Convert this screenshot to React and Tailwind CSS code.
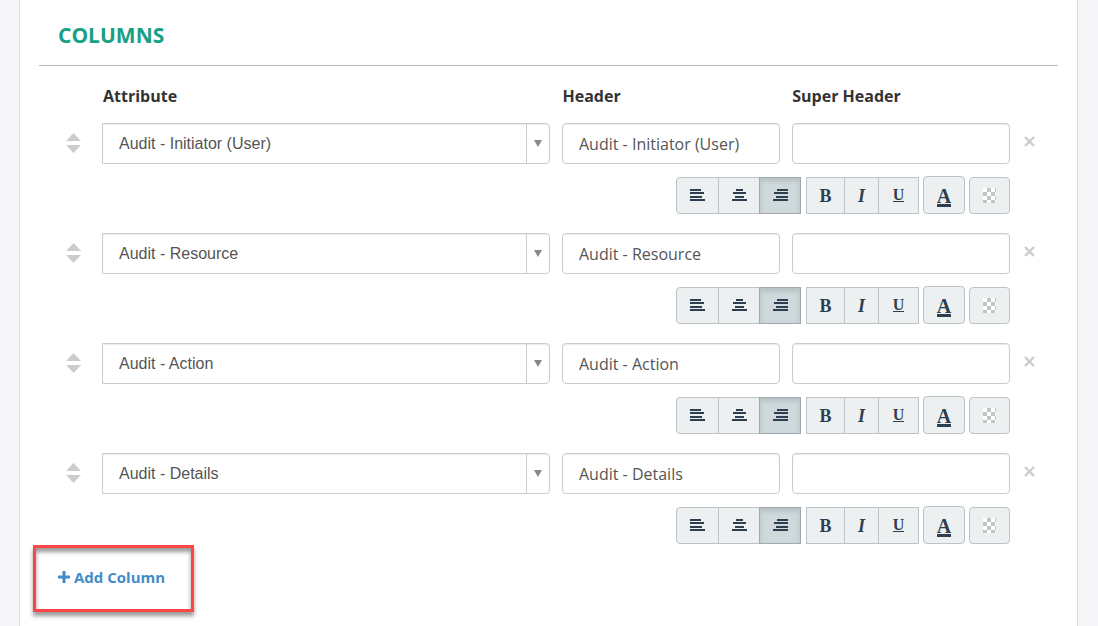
import clsx from "clsx"

const attributes = [
  "Audit - Initiator (User)",
  "Audit - Resource",
  "Audit - Action",
  "Audit - Details",
]

const alignLines = {
  left: [[0, 11], [0, 14], [0, 12], [0, 15]],
  center: [[4, 7], [1, 13], [3, 9], [0, 15]],
  right: [[4, 11], [1, 14], [3, 12], [0, 15]],
}

const toolButton = "flex items-center justify-center border border-[#bdc3c7] bg-[#ecf0f1] text-[#2c3e50] h-[37px]"
const letter = "font-['Liberation_Serif',serif] font-bold text-lg leading-6"
const textBox = "h-[41px] w-full min-w-0 rounded-sm border border-[#ccc] bg-white px-4 text-base text-[#555] shadow-[inset_0_1px_1px_rgba(0,0,0,0.08)]"

function AlignIcon({ side }) {
  return (
    <svg width="15" height="14" viewBox="0 0 15 14" fill="currentColor" shapeRendering="crispEdges" aria-hidden="true">
      {alignLines[side].map(([x, w], i) => (
        <rect key={i} x={x} y={[0, 3, 7, 10][i]} width={w} height="2" />
      ))}
    </svg>
  )
}

function CheckerIcon() {
  const cells = []
  for (let y = 0; y < 4; y++) {
    for (let x = 0; x < 4; x++) {
      cells.push(
        <rect key={`${x}-${y}`} x={x * 4} y={y * 4} width="4" height="4" fill={(x + y) % 2 ? "#c4c4c4" : "#fff"} />
      )
    }
  }
  return (
    <svg width="13" height="15" viewBox="0 0 13 15" aria-hidden="true">
      {cells}
    </svg>
  )
}

function Toolbar() {
  return (
    <div className="mt-3 flex items-end justify-end gap-1">
      <div className="mr-px flex">
        <button type="button" aria-label="Align left" className={clsx(toolButton, "w-[43px] rounded-l-sm")}>
          <AlignIcon side="left" />
        </button>
        <button type="button" aria-label="Align center" className={clsx(toolButton, "-ml-px w-[42px]")}>
          <AlignIcon side="center" />
        </button>
        <button
          type="button"
          aria-label="Align right"
          aria-pressed="true"
          className="-ml-px flex h-[37px] w-[42px] items-center justify-center border border-[#9fa9af] bg-[#cfd9db] text-[#2c3e50] shadow-[inset_0_3px_5px_rgba(0,0,0,0.125)]"
        >
          <AlignIcon side="right" />
        </button>
      </div>
      <div className="flex">
        <button type="button" aria-label="Bold" className={clsx(toolButton, "w-[39px]")}>
          <span className={letter}>B</span>
        </button>
        <button type="button" aria-label="Italic" className={clsx(toolButton, "-ml-px w-[35px]")}>
          <span className={clsx(letter, "italic")}>I</span>
        </button>
        <button type="button" aria-label="Underline" className={clsx(toolButton, "-ml-px w-[41px]")}>
          <span className="border-b border-[#2c3e50] font-['Liberation_Serif',serif] text-base leading-3 font-bold">U</span>
        </button>
      </div>
      <button type="button" aria-label="Text color" className="flex h-[38px] w-[42px] items-center justify-center rounded-sm border border-[#bdc3c7] bg-[#ecf0f1] text-[#2c3e50]">
        <span className="mt-1 border-b-3 border-[#2c3e50] font-['Liberation_Serif',serif] text-xl leading-4 font-bold">A</span>
      </button>
      <button type="button" aria-label="Background color" className={clsx(toolButton, "w-[41px] rounded-sm")}>
        <CheckerIcon />
      </button>
    </div>
  )
}

function ColumnRow({ attribute }) {
  return (
    <li className="flex">
      <button type="button" aria-label="Reorder" className="flex h-[39px] w-[63px] items-center pl-[27px] text-[#ccc]">
        <svg width="15" height="20" viewBox="0 0 15 20" fill="currentColor" aria-hidden="true">
          <path d="M0 8 L7.5 0 L15 8Z M0 12 H15 L7.5 20Z" />
        </svg>
      </button>
      <div className="min-w-0 flex-1">
        <div className="grid grid-cols-[448fr_218fr_218fr] gap-3">
          <div className="relative">
            <select
              aria-label="Attribute"
              defaultValue={attribute}
              className="h-[41px] w-full appearance-none rounded-r-sm border border-[#ccc] bg-white pr-8 pl-4 font-['Liberation_Sans',sans-serif] text-base text-[#555] shadow-[inset_0_1px_1px_rgba(0,0,0,0.08)]"
            >
              {attributes.map((name) => (
                <option key={name}>{name}</option>
              ))}
            </select>
            <span className="pointer-events-none absolute inset-y-px right-px flex w-[23px] items-center justify-center border-l border-[#ccc] text-[#888]">
              <svg width="8" height="7" viewBox="0 0 8 7" fill="currentColor" aria-hidden="true">
                <path d="M0 0 H8 L4 7Z" />
              </svg>
            </span>
          </div>
          <input type="text" aria-label="Header" defaultValue={attribute} className={textBox} />
          <input type="text" aria-label="Super Header" className={textBox} />
        </div>
        <Toolbar />
      </div>
      <button type="button" aria-label="Remove column" className="flex h-9 w-12 items-center pl-[14px] text-[#ccc]">
        <svg width="11" height="11" viewBox="0 0 11 11" stroke="currentColor" strokeWidth="2.4" aria-hidden="true">
          <path d="M1 1 L10 10 M10 1 L1 10" />
        </svg>
      </button>
    </li>
  )
}

export default function App() {
  return (
    <div className="min-h-screen bg-[#f6f6f9] pr-5 pl-[19px] font-['Open_Sans',sans-serif] text-[#333]">
      <main className="min-h-screen border-x border-[#ddd] bg-white px-[19px] pt-[21px]">
        <h2 className="border-b border-[#bbb] pb-4 pl-[19px] text-[21px] leading-7 font-bold text-[#16a085]">COLUMNS</h2>

        <div className="mt-[18px] mr-12 ml-16 grid grid-cols-[448fr_218fr_218fr] gap-3 text-base leading-6 font-bold">
          <span>Attribute</span>
          <span>Header</span>
          <span>Super Header</span>
        </div>

        <ul className="mt-[15px] flex flex-col gap-[19px]">
          {attributes.map((name) => (
            <ColumnRow key={name} attribute={name} />
          ))}
        </ul>

        <div className="mt-px -ml-1.5 flex h-[67px] w-[161px] items-center border-3 border-[#ff4545] pb-1 pl-[22px] shadow-[0_4px_4px_rgba(0,0,0,0.4),inset_0_4px_4px_rgba(0,0,0,0.4)]">
          <a href="#add" className="flex items-center gap-1 text-[15px] leading-6 font-bold text-[#428bca]">
            <svg width="12" height="12" viewBox="0 0 12 12" fill="currentColor" aria-hidden="true">
              <path d="M4.5 0.5 Q4.5 0 5 0 H7 Q7.5 0 7.5 0.5 V4.5 H11.5 Q12 4.5 12 5 V7 Q12 7.5 11.5 7.5 H7.5 V11.5 Q7.5 12 7 12 H5 Q4.5 12 4.5 11.5 V7.5 H0.5 Q0 7.5 0 7 V5 Q0 4.5 0.5 4.5 H4.5Z" />
            </svg>
            Add Column
          </a>
        </div>
      </main>
    </div>
  )
}
